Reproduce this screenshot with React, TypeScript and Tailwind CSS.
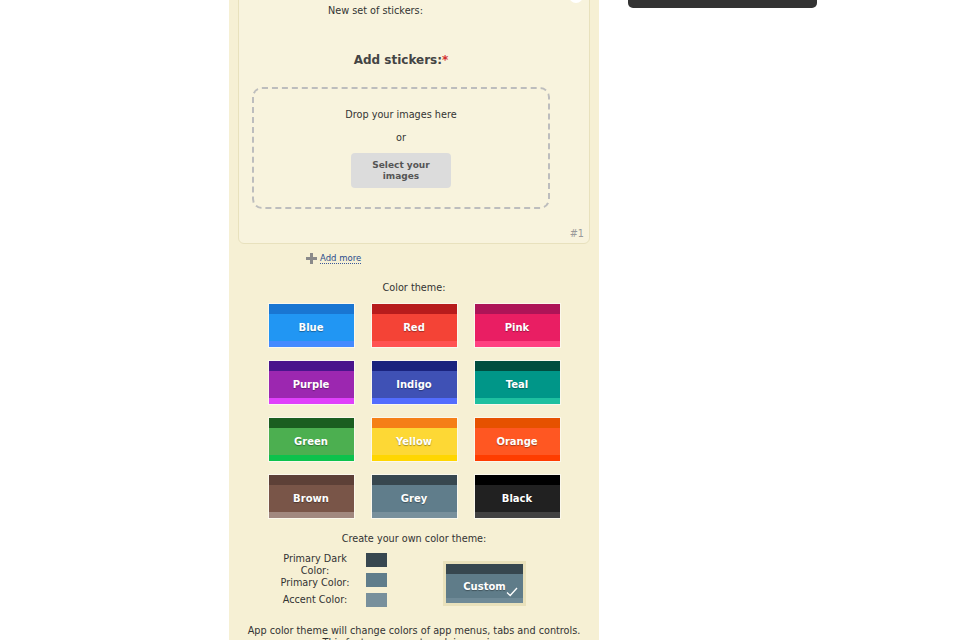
import React from "react";

type Theme = { name: string; dark: string; main: string; accent: string };

const themes: Theme[] = [
  { name: "Blue", dark: "bg-[#1976d2]", main: "bg-[#2196f3]", accent: "bg-[#448aff]" },
  { name: "Red", dark: "bg-[#b71c1c]", main: "bg-[#f44336]", accent: "bg-[#ff5252]" },
  { name: "Pink", dark: "bg-[#ad1457]", main: "bg-[#e91e63]", accent: "bg-[#ff4081]" },
  { name: "Purple", dark: "bg-[#4a148c]", main: "bg-[#9c27b0]", accent: "bg-[#e040fb]" },
  { name: "Indigo", dark: "bg-[#1a237e]", main: "bg-[#3f51b5]", accent: "bg-[#536dfe]" },
  { name: "Teal", dark: "bg-[#004d40]", main: "bg-[#009688]", accent: "bg-[#1ec0a0]" },
  { name: "Green", dark: "bg-[#1b5e20]", main: "bg-[#4caf50]", accent: "bg-[#0cc24c]" },
  { name: "Yellow", dark: "bg-[#f57f17]", main: "bg-[#fdd835]", accent: "bg-[#ffd600]" },
  { name: "Orange", dark: "bg-[#e65100]", main: "bg-[#ff5722]", accent: "bg-[#ff3d00]" },
  { name: "Brown", dark: "bg-[#5d4037]", main: "bg-[#795548]", accent: "bg-[#a1887f]" },
  { name: "Grey", dark: "bg-[#37474f]", main: "bg-[#607d8b]", accent: "bg-[#78909c]" },
  { name: "Black", dark: "bg-[#000000]", main: "bg-[#212121]", accent: "bg-[#424242]" },
];

function Swatch({ t }: { t: Theme }) {
  return (
    <div className="flex h-[43px] w-[85px] flex-col shadow-[0_0_0_1px_rgba(255,255,255,0.55)]">
      <div className={`h-[10px] ${t.dark}`} />
      <div
        className={`flex h-[27px] items-center justify-center text-[10px] font-bold text-white [text-shadow:0_1px_1px_rgba(0,0,0,0.35)] ${t.main}`}
      >
        {t.name}
      </div>
      <div className={`h-[6px] ${t.accent}`} />
    </div>
  );
}

export default function App() {
  return (
    <div
      className="flex h-[640px] w-[960px] overflow-hidden bg-white text-[#333]"
      style={{ fontFamily: '"DejaVu Sans", Verdana, sans-serif' }}
    >
      <div className="w-[229px] shrink-0" />
      {/* Main panel */}
      <div className="flex w-[370px] shrink-0 flex-col bg-[#f6f0d4]">
        {/* Card */}
        <div className="relative ml-[9px] -mt-[10px] flex w-[352px] flex-col rounded-[6px] border border-[#e8e1bd] bg-[#f8f3dd] pt-[14px] pb-[3px]">
          <div className="absolute right-[6px] top-[-2px] h-[14px] w-[14px] rounded-full bg-white" />
          <div className="pl-[89px] text-[9.7px] leading-[12px]">New set of stickers:</div>
          <div className="mt-[35px] ml-[13px] w-[298px] text-center text-[12px] font-bold leading-[16px] text-[#444]">
            Add stickers:<span className="text-[#d32f2f]">*</span>
          </div>
          <div className="mt-[19px] ml-[13px] flex h-[122px] w-[298px] flex-col items-center rounded-[10px] border-2 border-dashed border-[#bdbdbd] pt-[20px]">
            <div className="text-[9.7px] leading-[12px]">Drop your images here</div>
            <div className="mt-[11px] text-[9.7px] leading-[12px]">or</div>
            <div className="mt-[9px] flex h-[35px] w-[100px] items-center justify-center rounded-[4px] bg-[#dcdcdc] text-center text-[9px] font-bold leading-[11px] text-[#555]">
              Select your
              <br />
              images
            </div>
          </div>
          <div className="mt-[19px] pr-[5px] text-right text-[9.7px] leading-[12px] text-[#9a9a9a]">#1</div>
        </div>

        {/* Add more */}
        <div className="mt-[9px] flex h-[12px] items-center pl-[77px]">
          <svg width="11" height="11" viewBox="0 0 11 11" className="mr-[3px]">
            <rect x="4" y="0" width="3" height="11" fill="#8a8a8a" />
            <rect x="0" y="4" width="11" height="3" fill="#8a8a8a" />
          </svg>
          <span className="border-b border-dotted border-[#3b5998] text-[8.5px] leading-[10px] text-[#2b4c8c]">
            Add more
          </span>
        </div>

        {/* Color theme */}
        <div className="mt-[18px] text-center text-[9.7px] leading-[12px]">Color theme:</div>
        <div className="mx-auto mt-[10px] grid w-[291px] grid-cols-[85px_85px_85px] gap-x-[18px] gap-y-[14px]">
          {themes.map((t) => (
            <Swatch key={t.name} t={t} />
          ))}
        </div>

        <div className="mt-[15px] text-center text-[9.7px] leading-[12px]">Create your own color theme:</div>

        <div className="mt-[8px] flex pl-[50px]">
          <div className="flex w-[72px] flex-col text-center text-[9.7px] leading-[12px]">
            <div>
              Primary Dark
              <br />
              Color:
            </div>
            <div>Primary Color:</div>
            <div className="mt-[5px]">Accent Color:</div>
          </div>
          <div className="ml-[15px] flex flex-col gap-[6px]">
            <div className="h-[14px] w-[21px] bg-[#37474f]" />
            <div className="h-[14px] w-[21px] bg-[#607d8b]" />
            <div className="h-[14px] w-[21px] bg-[#78909c]" />
          </div>
          <div className="ml-[56px] mt-[8px] h-[45px] w-[83px] bg-[#e9e1bb] p-[3px]">
            <div className="relative flex h-[39px] w-[77px] flex-col">
              <div className="h-[10px] bg-[#37474f]" />
              <div className="flex h-[24px] items-center justify-center bg-[#5f7c89] text-[10px] font-bold text-white [text-shadow:0_1px_1px_rgba(0,0,0,0.35)]">
                Custom
              </div>
              <div className="h-[5px] bg-[#6f8a97]" />
              <svg
                width="12"
                height="10"
                viewBox="0 0 12 10"
                className="absolute right-[5px] top-[23px]"
              >
                <path d="M1 5.5 L4.2 8.5 L11 1" stroke="white" strokeWidth="1.3" fill="none" />
              </svg>
            </div>
          </div>
        </div>

        <div className="mt-[18px] text-center text-[9.7px] leading-[12px]">
          App color theme will change colors of app menus, tabs and controls.
          <br />
          This feature may not work in preview.
        </div>
      </div>

      {/* Right column */}
      <div className="ml-[29px] flex flex-col">
        <div className="h-[8px] w-[189px] rounded-b-[5px] bg-[#333333]" />
      </div>
    </div>
  );
}
